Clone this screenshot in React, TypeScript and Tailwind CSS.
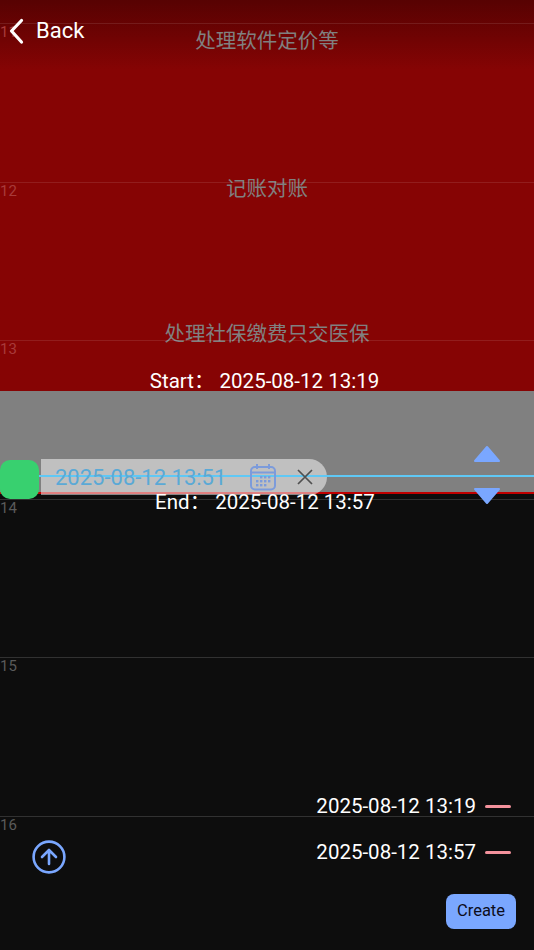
const hours = ["11", "12", "13", "14", "15", "16"];

function HourRow({ label, onRed }: { label: string; onRed: boolean }) {
  return (
    <div
      className={
        onRed
          ? "h-[158.6px] border-t border-white/10 text-[15px] leading-[16px] text-[#a83a3a]"
          : "h-[158.6px] border-t border-white/15 text-[15px] leading-[16px] text-[#5a5a5a]"
      }
    >
      {label}
    </div>
  );
}

function CalendarIcon() {
  return (
    <svg width="28" height="28" viewBox="0 0 28 28" fill="none" stroke="#7c9bdb" strokeWidth="2">
      <rect x="2" y="4" width="24" height="22.5" rx="4" />
      <path d="M2 9.5h24M8 1v5M20 1v5" />
      <g fill="#7c9bdb" stroke="none">
        <rect x="11" y="13" width="2.4" height="2.4" />
        <rect x="15" y="13" width="2.4" height="2.4" />
        <rect x="19" y="13" width="2.4" height="2.4" />
        <rect x="7" y="17" width="2.4" height="2.4" />
        <rect x="11" y="17" width="2.4" height="2.4" />
        <rect x="15" y="17" width="2.4" height="2.4" />
        <rect x="19" y="17" width="2.4" height="2.4" />
        <rect x="7" y="21" width="2.4" height="2.4" />
        <rect x="11" y="21" width="2.4" height="2.4" />
        <rect x="15" y="21" width="2.4" height="2.4" />
      </g>
    </svg>
  );
}

function Triangle({ down }: { down?: boolean }) {
  return (
    <svg width="28" height="18" viewBox="0 0 28 18" className={down ? "shrink-0 rotate-180" : "shrink-0"}>
      <path d="M14 2L26 16H2Z" fill="#7aa7ff" stroke="#7aa7ff" strokeWidth="2" strokeLinejoin="round" />
    </svg>
  );
}

function TimeMark({ time }: { time: string }) {
  return (
    <div className="flex items-center gap-[9px] text-[20.5px] leading-[24px] text-white">
      <span>{time}</span>
      <span className="h-[3px] w-[26px] rounded-full bg-[#f3929c]" />
    </div>
  );
}

export default function App() {
  return (
    <div className="relative flex h-[950px] w-[534px] flex-col overflow-hidden bg-[#0d0d0d] font-['Roboto','Noto_Sans_CJK_SC',sans-serif]">
      {/* selected range */}
      <section className="flex h-[391px] flex-col items-center bg-gradient-to-b from-[#570202] from-0% to-[#860404] to-[18%] pt-[29px] text-[20.5px] leading-[24px] text-[#808080]">
        <div>处理软件定价等</div>
        <div className="mt-[124px]">记账对账</div>
        <div className="mt-[121px]">处理社保缴费只交医保</div>
        <div className="mt-[23px] whitespace-pre pr-[5px] text-white">Start： 2025-08-12 13:19</div>
      </section>

      {/* current time band */}
      <section className="relative z-10 flex h-[103px] justify-between border-b-2 border-[#c00000] bg-[#808080]">
        <div className="mt-[69px] flex h-[39px] items-start">
          <div className="size-[39px] rounded-[10px] bg-[#38d06f]" />
          <div className="ml-[2px] -mt-[1px] flex h-[36px] w-[286px] items-center rounded-r-[18px] bg-white/50 pl-[14px]">
            <span className="relative z-10 pt-[2px] text-[22px] leading-[24px] text-[#5aa9d6]">2025-08-12 13:51</span>
            <span className="relative z-10 ml-[23px]"><CalendarIcon /></span>
            <svg className="relative z-10 ml-[20px]" width="16" height="16" viewBox="0 0 16 16" fill="none" stroke="#505050" strokeWidth="1.7">
              <path d="M1 1l14 14M15 1L1 15" />
            </svg>
          </div>
        </div>
        <div className="flex flex-col gap-[24px] pr-[33px] pt-[54px]">
          <Triangle />
          <Triangle down />
        </div>
        <div className="absolute left-[39px] right-0 top-[84px] h-[2px] bg-[#5fc8f5]" />
      </section>

      {/* below the range */}
      <section className="flex flex-1 flex-col">
        <div className="relative z-10 -mt-[4px] whitespace-pre text-center text-[20.5px] leading-[24px] text-white">
          <div className="pr-[4px]">End： 2025-08-12 13:57</div>
        </div>
        <div className="mt-[280px] flex justify-end pr-[23px]">
          <TimeMark time="2025-08-12 13:19" />
        </div>
        <div className="mt-[22px] flex items-start justify-between pl-[32px] pr-[23px]">
          <svg width="34" height="34" viewBox="0 0 34 34" fill="none" stroke="#7aa7ff" strokeWidth="2.6" strokeLinecap="round" strokeLinejoin="round">
            <circle cx="17" cy="17" r="15.4" />
            <path d="M17 24V10M10 17l7-7 7 7" />
          </svg>
          <TimeMark time="2025-08-12 13:57" />
        </div>
        <div className="mt-[20px] flex justify-end pr-[18px]">
          <button className="h-[35px] w-[70px] rounded-[8px] bg-[#7aa7ff] text-[16.5px] text-[#0d0d1a]">Create</button>
        </div>
      </section>

      {/* hour grid, drawn over the bands */}
      <div className="absolute inset-x-0 top-[23px]">
        {hours.map((h, i) => (
          <HourRow key={h} label={h} onRed={i < 3} />
        ))}
      </div>

      {/* floating back button */}
      <div className="absolute left-[7px] top-[16px] z-20 flex items-center gap-[11px] text-[22px] leading-[30px] text-white">
        <svg width="18" height="30" viewBox="0 0 18 30" fill="none" stroke="#ffffff" strokeWidth="3.2" strokeLinecap="round" strokeLinejoin="round">
          <path d="M14.5 4.5L4.5 15l10 11" />
        </svg>
        <span className="-mt-[1px]">Back</span>
      </div>
    </div>
  );
}
